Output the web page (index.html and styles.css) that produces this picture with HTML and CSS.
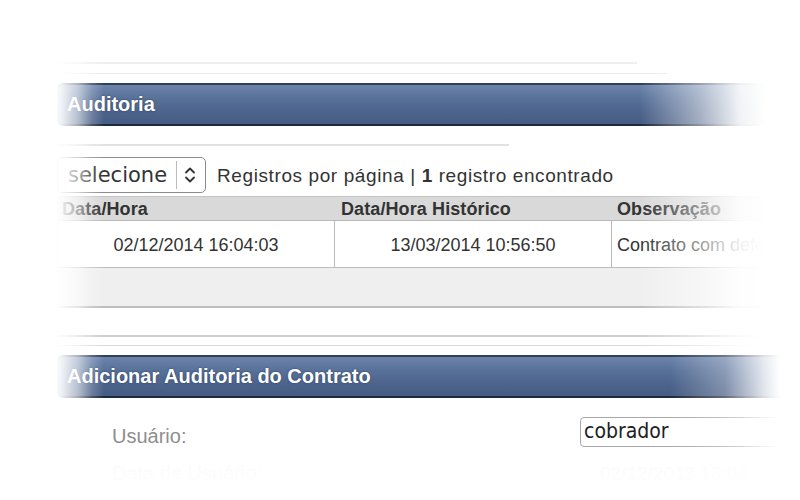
FILE: index.html
```html
<!DOCTYPE html>
<html lang="pt">
<head>
<meta charset="utf-8">
<title>Auditoria</title>
<link rel="stylesheet" href="styles.css">
</head>
<body>
<div class="page">
  <div class="rule rule-a"></div>
  <div class="rule rule-b"></div>

  <div class="panel-head">Auditoria</div>
  <div class="rule rule-c"></div>

  <div class="toolbar">
    <div class="select">
      <span class="select-text">selecione</span>
      <span class="select-div"></span>
      <svg class="select-arrows" width="14" height="22" viewBox="0 0 14 22"><path d="M3 8.5 L7 4.5 L11 8.5 M3 13.5 L7 17.5 L11 13.5" fill="none" stroke="#333" stroke-width="1.8" stroke-linecap="round" stroke-linejoin="round"/></svg>
    </div>
    <span class="records">Registros por página | <b>1</b> registro encontrado</span>
  </div>

  <div class="grid">
    <div class="cell th c1">Data/Hora</div>
    <div class="cell th c2">Data/Hora Histórico</div>
    <div class="cell th c3">Observação</div>
    <div class="cell td c1 center">02/12/2014 16:04:03</div>
    <div class="cell td c2 center">13/03/2014 10:56:50</div>
    <div class="cell td c3">Contrato com defeito</div>
    <div class="tfoot"></div>
  </div>

  <div class="rule rule-d"></div>
  <div class="rule rule-e"></div>

  <div class="panel-head">Adicionar Auditoria do Contrato</div>

  <div class="form">
    <div class="form-row first">
      <span class="label">Usuário:</span>
      <span class="input">cobrador</span>
    </div>
    <div class="form-row faint">
      <span class="label">Data de Usuário:</span>
      <span class="value">02/12/2013 16:04</span>
    </div>
  </div>

  <div class="fade fade-left"></div>
  <div class="fade fade-right-top"></div>
  <div class="fade fade-right-bottom"></div>
  <div class="fade fade-top"></div>
  <div class="fade fade-bottom"></div>
</div>
</body>
</html>
```

FILE: styles.css
```css
html, body {
  margin: 0;
  padding: 0;
  background: #fff;
  overflow: hidden;
}
.page {
  position: relative;
  width: 800px;
  height: 500px;
  overflow: hidden;
  padding-left: 57px;
  box-sizing: border-box;
  font-family: "Liberation Sans", Arial, sans-serif;
  color: #333;
}
.rule {
  height: 0;
}
.rule-a {
  margin-top: 62px;
  width: 580px;
  border-top: 2px solid #d6d6d6;
}
.rule-b {
  margin-top: 9px;
  margin-left: -10px;
  width: 620px;
  border-top: 1px solid #dcdcdc;
}
.panel-head {
  margin-top: 9px;
  width: 760px;
  height: 39px;
  border-top: 2px solid #2e3f5c;
  border-bottom: 2px solid #1c2a40;
  border-radius: 6px 0 0 6px;
  background: linear-gradient(#6c84aa 0%, #587199 35%, #4c638b 70%, #465c82 100%);
  color: #fff;
  font-weight: bold;
  font-size: 20px;
  line-height: 39px;
  padding-left: 10px;
  box-sizing: content-box;
  text-shadow: 0 0 2px rgba(20, 30, 50, 0.6);
}
.rule-c {
  margin-top: 18px;
  margin-left: -18px;
  width: 470px;
  border-top: 2px solid #e2e2e2;
}
.toolbar {
  margin-top: 11px;
  display: flex;
  align-items: center;
  gap: 11px;
  height: 36px;
}
.select {
  display: flex;
  align-items: center;
  width: 149px;
  height: 36px;
  box-sizing: border-box;
  border: 1px solid #8c8c8c;
  border-radius: 5px;
  background: #fff;
  padding-left: 10px;
}
.select-text {
  font-family: "DejaVu Sans", sans-serif;
  font-size: 21px;
  color: #333;
  width: 108px;
}
.select-div {
  width: 1px;
  height: 28px;
  background: #bbb;
  margin-right: 6px;
}
.select-arrows {
  display: block;
}
.records {
  font-size: 19px;
  letter-spacing: 0.6px;
  color: #333;
  position: relative;
  top: 1px;
}
.records b {
  font-weight: bold;
}
.grid {
  margin-top: 3px;
  width: 760px;
  display: grid;
  grid-template-columns: 277px 277px 1fr;
  border-left: 1px solid #cfcfcf;
}
.cell {
  box-sizing: border-box;
  font-size: 18px;
  white-space: nowrap;
  overflow: hidden;
}
.th {
  height: 25px;
  line-height: 25px;
  background: #d9d9d9;
  border-top: 1px solid #c4c4c4;
  border-bottom: 1px solid #b9b9b9;
  font-weight: bold;
  letter-spacing: 0.1px;
  color: #333;
}
.th.c1 { padding-left: 4px; }
.th.c2 { padding-left: 6px; }
.th.c3 { padding-left: 5px; }
.td {
  height: 47px;
  line-height: 48px;
  border-bottom: 1px solid #bcbcbc;
  background: #fff;
  color: #333;
}
.td.c1, .td.c2 { border-right: 1px solid #b9b9b9; }
.td.c3 { padding-left: 5px; }
.center { text-align: center; }
.tfoot {
  grid-column: 1 / 4;
  height: 40px;
  background: #efefef;
  border-bottom: 2px solid #bdbdbd;
  box-sizing: border-box;
}
.rule-d {
  margin-top: 27px;
  margin-left: -12px;
  width: 720px;
  border-top: 2px solid #cfcfcf;
}
.rule-e {
  margin-top: 8px;
  margin-left: -12px;
  width: 720px;
  border-top: 1px solid #d8d8d8;
}
.form {
  padding-left: 55px;
}
.form-row {
  display: flex;
  align-items: center;
}
.form-row.first {
  margin-top: 19px;
  height: 30px;
  padding-bottom: 10px;
  border-bottom: 1px solid transparent;
}
.label {
  flex: 0 0 468px;
  font-size: 20px;
  color: #8e8e8e;
  position: relative;
  top: 4px;
}
.input {
  flex: 0 0 230px;
  height: 30px;
  box-sizing: border-box;
  border: 1px solid #a8a8a8;
  border-radius: 4px;
  padding-left: 3px;
  font-family: "DejaVu Sans Condensed", "DejaVu Sans", sans-serif;
  font-stretch: condensed;
  font-size: 21px;
  line-height: 27px;
  color: #222;
  background: #fff;
}
.faint {
  margin-top: 4px;
  color: #f3f3f3;
}
.faint .label {
  color: #f3f3f3;
  top: 0;
}
.faint .value {
  font-size: 19px;
  color: #f3f3f3;
  padding-left: 20px;
}
.fade {
  position: absolute;
  pointer-events: none;
}
.fade-left {
  left: 0;
  top: 0;
  width: 110px;
  height: 500px;
  background: linear-gradient(to right, #fff 0, #fff 54px, rgba(255,255,255,0.9) 62px, rgba(255,255,255,0.6) 78px, rgba(255,255,255,0.2) 92px, rgba(255,255,255,0) 104px);
}
.fade-right-top {
  right: 0;
  top: 0;
  width: 160px;
  height: 352px;
  background: linear-gradient(to right, rgba(255,255,255,0) 0, rgba(255,255,255,0.5) 60px, rgba(255,255,255,0.92) 100px, #fff 125px);
}
.fade-right-bottom {
  right: 0;
  top: 352px;
  width: 130px;
  height: 148px;
  background: linear-gradient(to right, rgba(255,255,255,0) 0, rgba(255,255,255,0.3) 55px, rgba(255,255,255,0.85) 95px, #fff 110px);
}
.fade-top {
  left: 0;
  top: 0;
  width: 800px;
  height: 80px;
  background: linear-gradient(#fff 0, #fff 40px, rgba(255,255,255,0.4) 75px, rgba(255,255,255,0) 80px);
}
.fade-bottom {
  left: 0;
  bottom: 0;
  width: 800px;
  height: 50px;
  background: linear-gradient(rgba(255,255,255,0) 0, rgba(255,255,255,0.75) 20px, #fff 45px);
}
```
